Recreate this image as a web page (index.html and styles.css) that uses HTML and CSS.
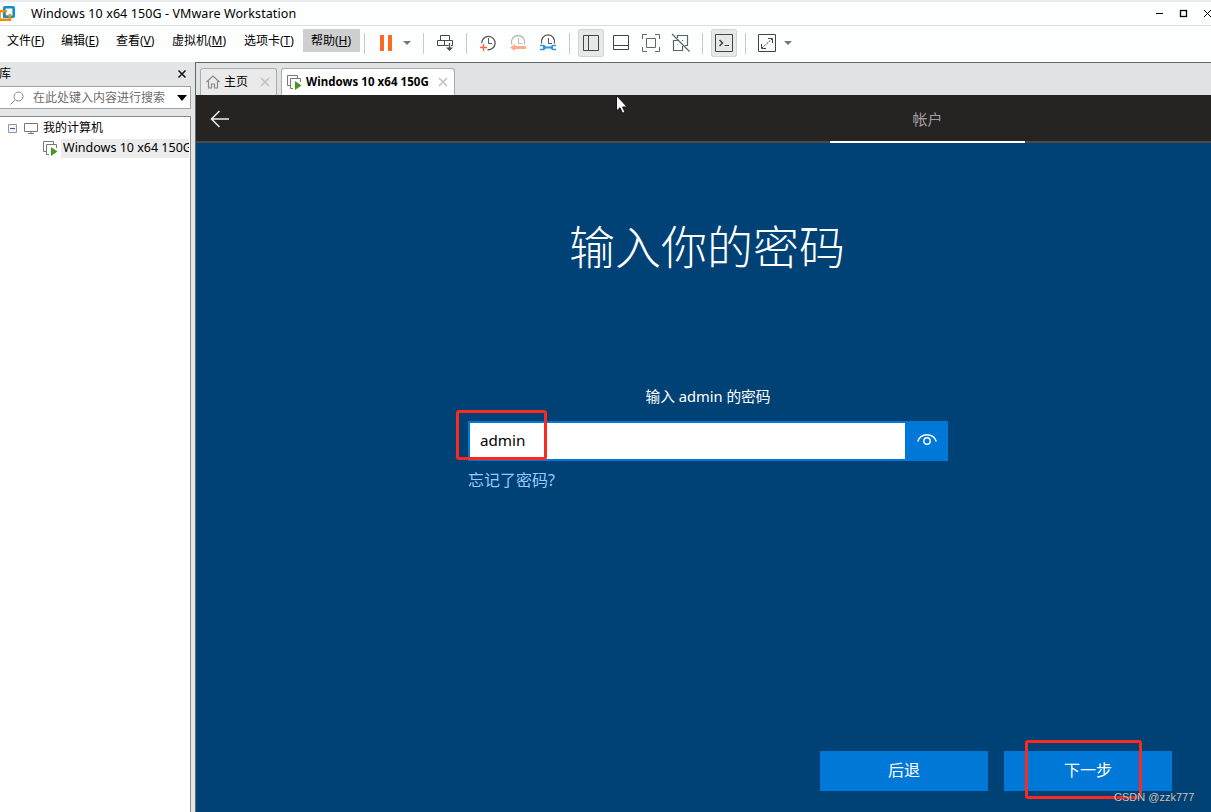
FILE: index.html
```html
<!DOCTYPE html>
<html lang="zh-CN">
<head>
  <meta charset="UTF-8">
  <title>Windows 10 x64 150G - VMware Workstation</title>
  <link rel="stylesheet" href="styles.css">
</head>
<body>
  <div class="window">
    <header class="titlebar">
      <svg class="logo" width="16" height="17" viewBox="0 0 16 17" fill="none" stroke-width="2.600">
        <rect x="4.300" y="2.300" width="9.400" height="9.400" rx=".6" stroke="#0c91cb"/>
        <path d="M7 6.300H-.5v8.400h10.300V9" stroke="#f18b00"/>
        <path d="M4.300 8v3.700H8" stroke="#0c91cb"/>
      </svg>
      <span class="title">Windows 10 x64 150G - VMware Workstation</span>
      <svg class="controls" width="56" height="14" viewBox="0 0 56 14" fill="none" stroke="#000">
        <path d="M1 7.500h7"/>
        <rect x="25.500" y="4.500" width="6" height="6" stroke-width="1.300"/>
        <path d="M49 4l7 7M56 4l-7 7"/>
      </svg>
    </header>

    <div class="menubar">
      <nav class="menu">
        <span class="menu-file">文件(<u>F</u>)</span>
        <span class="menu-edit">编辑(<u>E</u>)</span>
        <span class="menu-view">查看(<u>V</u>)</span>
        <span class="menu-vm">虚拟机(<u>M</u>)</span>
        <span class="menu-tabs">选项卡(<u>T</u>)</span>
        <span class="menu-help">帮助(<u>H</u>)</span>
      </nav>
      <div class="toolbar">
        <i class="sep"></i>
        <svg class="tool pause" viewBox="0 0 26 28"><path d="M7 6h4v16H7zM15 6h4v16h-4z" fill="#fd6a24"/></svg>
        <svg class="tool caret" viewBox="0 0 16 28"><path d="M4 12h8l-4 4z" fill="#777"/></svg>
        <i class="sep"></i>
        <svg class="tool send" viewBox="0 0 27 28" fill="none" stroke="#4a4a4a"><path d="M8.500 6.500h9v5h-9zM5.500 11.500h7v5h-7zM16.500 16.500h-4v-5h8v5h-1.500"/><path d="M17.500 14v7" stroke-width="1.300"/><path d="M14 18.500h7L17.500 22z" fill="#4a4a4a" stroke="none"/></svg>
        <i class="sep"></i>
        <svg class="tool snapshot" viewBox="0 0 30 28" fill="none"><path d="M8.700 14A6.700 6.700 0 1 1 14.500 20.700" stroke="#555" stroke-width="1.300"/><path d="M15.500 9v5.500H19" stroke="#555"/><path d="M7 18.500h7M10.500 15v7" stroke="#f2663a" stroke-width="1.300"/></svg>
        <svg class="tool" viewBox="0 0 30 28" fill="none"><path d="M8.700 15.500A6.700 6.700 0 1 1 21.300 15.500" stroke="#bbb" stroke-width="1.300"/><path d="M15.500 9v5.500H19" stroke="#bbb"/><path d="M7 18.500l5-3.500v2h11v3H12v2z" fill="#ffad87"/></svg>
        <svg class="tool" viewBox="0 0 30 28" fill="none"><path d="M8.700 14.500A6.600 6.600 0 1 1 21.300 14.500" stroke="#555" stroke-width="1.300"/><path d="M15.500 9v5.500H19" stroke="#555"/><path d="M7 15.700h4l2 1.800h4.500l2-1.800H23v1.600h-3v2.400h3v1.600h-3.500l-2-1.800H13l-2 1.800H7v-1.600h3v-2.400H7z" fill="#3195d7"/></svg>
        <i class="sep wide"></i>
        <svg class="tool active" viewBox="0 0 26 28" fill="none" stroke="#444"><path d="M5.500 6.500h15v15h-15zM10.500 6.500v15"/></svg>
        <svg class="tool console" viewBox="0 0 30 28" fill="none" stroke="#444"><path d="M7.500 6.500h15v14h-15zM7.500 16.500h15"/></svg>
        <svg class="tool" viewBox="0 0 30 28" fill="none" stroke="#666"><path d="M10.500 9.500h9v9h-9zM6.500 10V5.500H11M19 5.500h4.500V10M23.500 18v4.500H19M11 22.500H6.500V18"/></svg>
        <svg class="tool" viewBox="0 0 30 28" fill="none" stroke="#536670"><path d="M11.500 9V6.500h10v10H19M12 11.500H7.500v10h9V17M16 11.500h.5v.5M11.500 15.500v.5M6 5l17.500 17.500" stroke-width="1.200"/></svg>
        <i class="sep wide"></i>
        <svg class="tool active" viewBox="0 0 26 28" fill="none" stroke="#444"><path d="M4.500 5.500h17v17h-17z"/><path d="M8.500 11l3 3-3 3" stroke-width="1.500"/><path d="M13.500 16.500H18"/></svg>
        <i class="sep"></i>
        <svg class="tool fullscreen" viewBox="0 0 30 28" fill="none" stroke="#444"><path d="M6.500 5.500h17v17h-17zM16 9.500h4.500V14M9.500 15v4.500H14"/><path d="M10 19L20 10" stroke-dasharray="2 1"/></svg>
        <svg class="tool last-caret" viewBox="0 0 12 28"><path d="M2 12h8l-4 4z" fill="#777"/></svg>
      </div>
    </div>

    <div class="workspace">
      <aside class="sidebar">
        <div class="side-title">
          <span>库</span>
          <svg width="10" height="10" viewBox="0 0 10 10" stroke="#111" stroke-width="1.500"><path d="M1.500 1.500l7 7M8.500 1.500l-7 7"/></svg>
        </div>
        <div class="search">
          <svg width="14" height="14" viewBox="0 0 14 14" fill="none" stroke="#888"><circle cx="8.500" cy="5.500" r="4.500"/><path d="M5 9l-4.500 4.500"/></svg>
          <span>在此处键入内容进行搜索</span>
          <svg width="10" height="6" viewBox="0 0 10 6"><path d="M0 0h10L5 6z"/></svg>
        </div>
        <div class="tree">
          <div class="tree-row">
            <svg class="expander" width="9" height="9" viewBox="0 0 9 9" fill="#f5f6f8"><path d="M.5.5h8v8h-8z" stroke="#93979d"/><path d="M2 4.500h5" stroke="#3956a8"/></svg>
            <svg class="computer" width="14" height="12" viewBox="0 0 14 12" fill="none" stroke="#777"><path d="M.5 1.500h13v8H.5zM7 9v2M4 11.500h6"/></svg>
            <span>我的计算机</span>
          </div>
          <div class="tree-row child">
            <svg width="15" height="15" viewBox="0 0 15 15" fill="none" stroke="#777"><path d="M3 10.500H.5V.5h10V3M6 13.500H3.500v-10h10V7"/><path d="M8 6l6.500 4.500L8 15z" fill="#47991d" stroke="none"/></svg>
            <span class="vm-name">Windows 10 x64 150G</span>
          </div>
        </div>
      </aside>

      <main class="content">
        <div class="tabs">
          <div class="tab home">
            <svg width="14" height="14" viewBox="0 0 14 14" fill="none" stroke="#888" stroke-width="1.200"><path d="M.5 7L7 1l6.500 6M2.500 6v7h3V9h3v4h3V6"/></svg>
            <span>主页</span>
            <svg class="close" width="10" height="10" viewBox="0 0 10 10"><path d="M1 1l8 8M9 1l-8 8"/></svg>
          </div>
          <div class="tab current">
            <svg width="15" height="15" viewBox="0 0 15 15" fill="none" stroke="#777"><path d="M3 10.500H.5V.5h10V3M6 13.500H3.500v-10h10V7"/><path d="M8 6l6.500 4.500L8 15z" fill="#47991d" stroke="none"/></svg>
            <span class="tab-name">Windows 10 x64 150G</span>
            <svg class="close" width="10" height="10" viewBox="0 0 10 10"><path d="M1 1l8 8M9 1l-8 8"/></svg>
          </div>
        </div>

        <div class="setup-head">
          <svg class="back" width="20" height="18" viewBox="0 0 20 18" fill="none" stroke="#eee" stroke-width="1.500"><path d="M19 9H2M9.500 1L1.500 9l8 8"/></svg>
          <div class="step">帐户</div>
        </div>

        <section class="setup">
          <h1>输入你的密码</h1>
          <p class="prompt">输入 admin 的密码</p>
          <div class="field">
            <div class="password">admin</div>
            <div class="reveal">
              <svg width="20" height="14" viewBox="0 0 20 14" fill="none" stroke="#fff" stroke-width="1.400"><path d="M.7 9.500a9.500 8.500 0 0 1 18.600 0"/><circle cx="10" cy="9" r="3.200"/></svg>
            </div>
          </div>
          <div class="forgot">忘记了密码?</div>
          <div class="buttons">
            <div class="button">后退</div>
            <div class="button">下一步</div>
          </div>
        </section>
      </main>
    </div>

    <div class="mark mark-input"></div>
    <div class="mark mark-next"></div>
    <svg class="cursor" width="12" height="19" viewBox="0 0 12 19"><path d="M.5.5v15.500l3.500-3.300 2.500 5.500 2.500-1-2.400-5.200h4.600z" fill="#fff" stroke="#15151f"/></svg>
    <div class="watermark">CSDN @zzk777</div>
  </div>
</body>
</html>
```

FILE: styles.css
```css
* {
  box-sizing: border-box;
}
body {
  margin: 0;
  font: 12px/16px "Noto Sans", "Noto Sans CJK SC", sans-serif;
  color: #000;
}
svg {
  display: block;
  flex-shrink: 0;
}
.window {
  position: relative;
  display: flex;
  flex-direction: column;
  width: 1211px;
  height: 812px;
  overflow: hidden;
  white-space: nowrap;
  background: #fdfefe;
}

/* title bar */
.titlebar {
  display: flex;
  align-items: center;
  height: 26px;
  border-top: 2px solid #ebecf0;
  border-bottom: 1px solid #dcdedd;
}
.title {
  margin-left: 15px;
  font-size: 12.500px;
  letter-spacing: .09px;
}
.controls {
  margin-left: auto;
  margin-top: -2px;
}

/* menu and toolbar */
.menubar {
  display: flex;
  height: 36px;
  padding-top: 3px;
}
.menu {
  display: flex;
  width: 364px;
  height: 23px;
  line-height: 23px;
  padding-left: 7px;
}
.menu-file {
  width: 54px;
}
.menu-edit {
  width: 55px;
}
.menu-view {
  width: 56px;
}
.menu-vm {
  width: 72px;
}
.menu-tabs {
  width: 59px;
}
.menu-help {
  width: 57px;
  padding-right: 1px;
  text-align: center;
  background: #cfcfcf;
}
.toolbar {
  display: flex;
  height: 28px;
}
.sep {
  width: 1px;
  height: 21px;
  margin: 4px 8px 0;
  background: #c9c9c9;
}
.sep:first-child {
  margin-left: 0;
}
.sep.wide {
  margin-left: 6px;
}
.tool {
  width: 30px;
  height: 28px;
}
.pause,
.active {
  width: 26px;
}
.caret {
  width: 16px;
}
.send {
  width: 27px;
  margin-right: -1px;
}
.snapshot,
.fullscreen {
  margin-left: -2px;
}
.console {
  margin-left: 2px;
}
.active {
  background: #e7e8e8;
  border-radius: 3px;
  box-shadow: inset 0 0 0 1px #d2d5d4;
}
.last-caret {
  width: 12px;
}

/* library */
.workspace {
  display: flex;
  flex: 1;
}
.sidebar {
  display: flex;
  flex-direction: column;
  width: 195px;
  padding-right: 4px;
  background: #e4e5e7;
}
.side-title {
  display: flex;
  justify-content: space-between;
  align-items: center;
  height: 24px;
  padding: 0 4px 1px 0;
}
.side-title span {
  margin-left: -1px;
}
.search {
  display: flex;
  align-items: center;
  height: 23px;
  padding: 0 3px 0 10px;
  border: 1px solid #a0a3a4;
  border-left: 0;
  color: #6d6d6d;
  background: #fff;
}
.search span {
  margin: 0 auto 0 9px;
}
.tree {
  flex: 1;
  margin-top: 7px;
  padding-top: 1px;
  border: solid #85898d;
  border-width: 1px 1px 0 0;
  background: #fff;
}
.tree-row {
  display: flex;
  align-items: center;
  height: 20px;
}
.expander {
  margin-left: 8px;
}
.computer {
  margin: 0 5px 0 7px;
}
.child {
  padding-left: 43px;
}
.vm-name {
  flex: 1;
  margin-left: 3px;
  margin-right: 1px;
  padding-left: 2px;
  overflow: hidden;
  height: 19px;
  line-height: 17px;
  font-size: 12.500px;
  background: #ececec;
}

/* tabs */
.content {
  display: flex;
  flex-direction: column;
  flex: 1;
  border-top: 1px solid #666a67;
  border-left: 1px solid #666a67;
}
.tabs {
  display: flex;
  align-items: flex-end;
  height: 32px;
  padding-left: 4px;
  background: #e1e2e4;
}
.tab {
  display: flex;
  align-items: center;
  height: 27px;
  border: 1px solid #aaadab;
  border-bottom: 0;
  border-radius: 3px 3px 0 0;
}
.home {
  width: 77px;
  padding: 0 6px 0 5px;
  background: #e9eae9;
}
.home span {
  margin-left: 4px;
}
.close {
  margin-left: auto;
  stroke: #c3c3c3;
  stroke-width: 1.700;
}
.current {
  width: 174px;
  margin-left: 4px;
  padding: 0 6px 0 5px;
  background: #fff;
}
.tab-name {
  margin-left: 4px;
  font-size: 11.500px;
  font-weight: bold;
  letter-spacing: .05px;
}

/* guest screen */
.setup-head {
  display: flex;
  align-items: flex-start;
  height: 48px;
  background: linear-gradient(#262423 46px, #4c4947 46px);
}
.back {
  margin: 15px 0 0 14px;
}
.step {
  width: 195px;
  height: 48px;
  margin-left: 600px;
  border-bottom: 2px solid #fff;
  text-align: center;
  font-size: 15px;
  line-height: 48px;
  color: #a09e9d;
}
.setup {
  display: flex;
  flex-direction: column;
  flex: 1;
  padding-left: 272px;
  color: #fff;
  background: #004275;
}
h1 {
  width: 478px;
  margin: 68px 0 0;
  text-align: center;
  font-family: "Noto Sans CJK SC", sans-serif;
  font-size: 46px;
  font-weight: 300;
  line-height: 66px;
}
.prompt {
  width: 480px;
  margin: 108px 0 0;
  text-align: center;
  font-size: 14.700px;
  line-height: 22px;
}
.field {
  display: flex;
  width: 480px;
  height: 40px;
  margin-top: 14px;
}
.password {
  width: 437px;
  padding-left: 10px;
  border: 2px solid #0078d7;
  border-right: 0;
  font-size: 15.200px;
  line-height: 35px;
  color: #000;
  background: #fff;
}
.reveal {
  display: flex;
  flex: 1;
  align-items: center;
  justify-content: center;
  padding-bottom: 4px;
  background: #0078d7;
}
.forgot {
  margin-top: 8px;
  font-size: 16px;
  line-height: 22px;
  color: #99c9ff;
}
.buttons {
  display: flex;
  gap: 16px;
  margin: auto 0 21px 352px;
}
.button {
  width: 168px;
  height: 40px;
  text-align: center;
  font-size: 16px;
  line-height: 39px;
  background: #0078d7;
}

/* annotations */
.mark {
  position: absolute;
  border: 3px solid #fb2a20;
  border-radius: 3px;
}
.mark-input {
  left: 456px;
  top: 410px;
  width: 91px;
  height: 50px;
}
.mark-next {
  left: 1025px;
  top: 740px;
  width: 117px;
  height: 59px;
}
.cursor {
  position: absolute;
  left: 616px;
  top: 95px;
}
.watermark {
  position: absolute;
  left: 1114px;
  top: 789px;
  font: 11px/16px "Liberation Sans", sans-serif;
  color: #b9c6d2;
  text-shadow: 1px 1px 1px #26394a;
}
```
